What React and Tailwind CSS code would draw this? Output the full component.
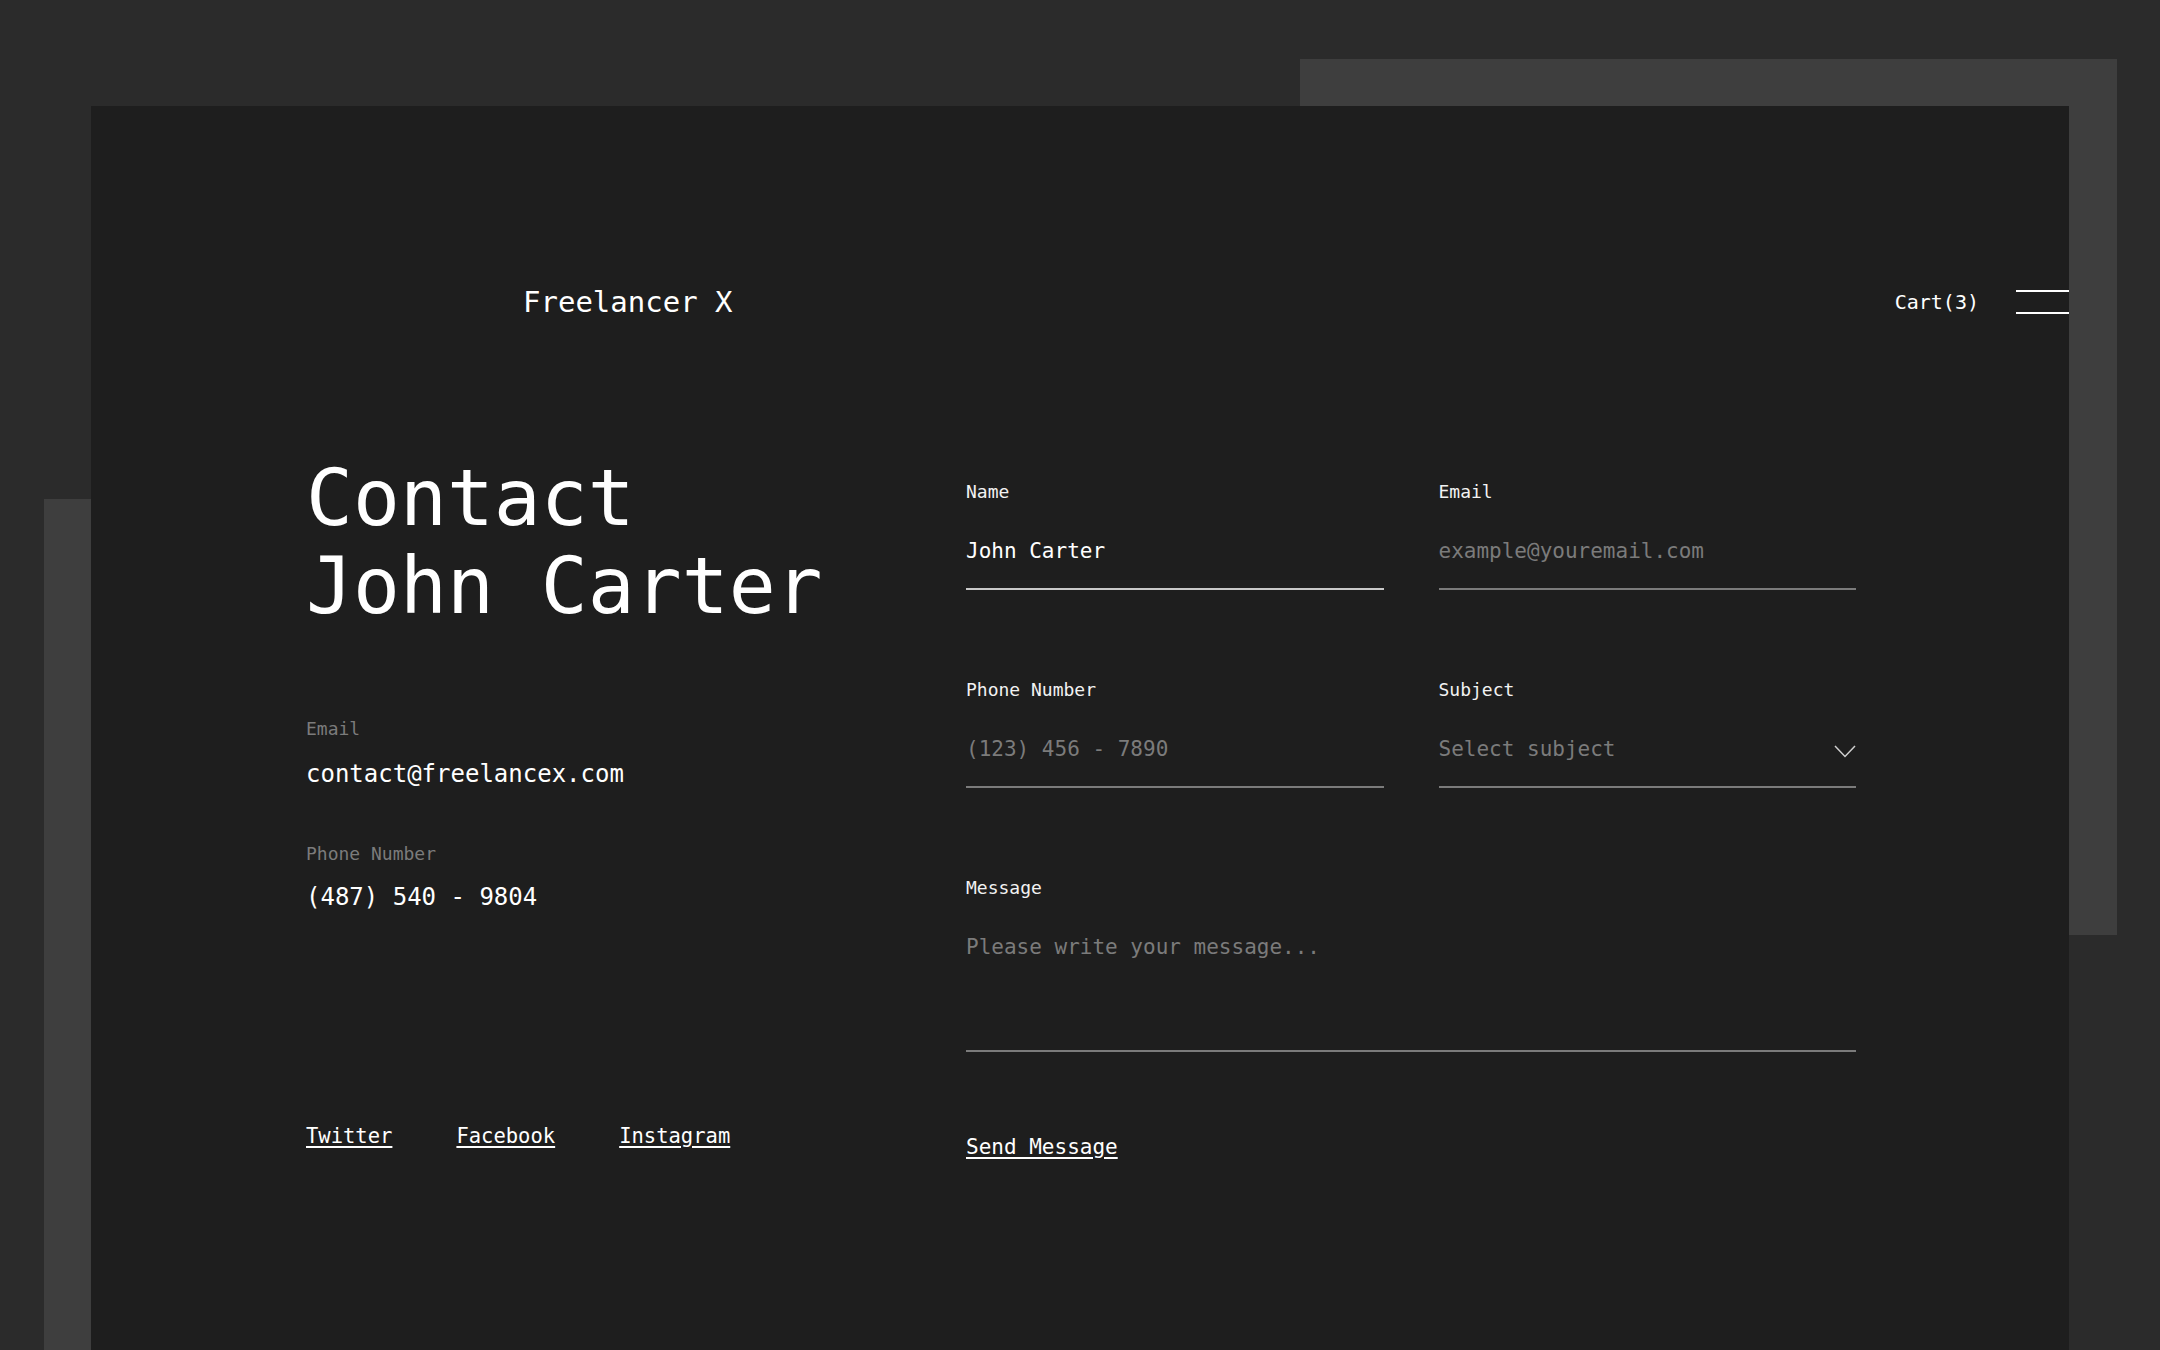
import React from 'react';

const mono = "font-['DejaVu_Sans_Mono','Liberation_Mono',monospace]";

const Field = ({ label, children }) => (
  <div className="flex flex-col">
    <label className="text-[18px] leading-[24px] text-[#f2f2f2]">{label}</label>
    {children}
  </div>
);

const inputCls =
  "w-full h-[86px] pt-[32px] pb-[22px] bg-transparent outline-none text-[21px] leading-[30px] text-white placeholder:text-[#7b7b7b] border-b-2";

export default function App() {
  return (
    <div className={`relative w-full h-[1350px] overflow-hidden bg-[#2b2b2b] ${mono}`}>
      {/* decorative back panels */}
      <div className="absolute left-[1300px] top-[59px] w-[817px] h-[876px] bg-[#3e3e3e]" />
      <div className="absolute left-[44px] top-[499px] w-[60px] h-[851px] bg-[#3e3e3e]" />

      <div className="relative ml-[91px] pt-[106px]">
        <div className="w-[1978px] h-[1244px] bg-[#1e1e1e] pt-[176px]">
          {/* Header */}
          <header className="h-[40px] flex items-center justify-between pl-[432px]">
            <span className="text-[29px] leading-[40px] text-white">Freelancer X</span>
            <div className="flex items-center gap-[37px]">
              <span className="text-[20px] leading-[28px] text-white">Cart(3)</span>
              <button className="w-[53px] h-[24px] flex flex-col justify-between">
                <span className="block h-[2px] w-full bg-white" />
                <span className="block h-[2px] w-full bg-white" />
              </button>
            </div>
          </header>

          {/* Main */}
          <main className="mt-[134px] pl-[215px] pr-[213px] flex">
            <section className="w-[660px] flex flex-col">
              <h1 className="-mt-[2px] text-[78px] leading-[88px] text-white font-normal">
                Contact
                <br />
                John Carter
              </h1>

              <div className="mt-[87px] text-[18px] leading-[24px] text-[#7b7b7b]">Email</div>
              <div className="mt-[17px] text-[24px] leading-[32px] text-white">contact@freelancex.com</div>

              <div className="mt-[52px] text-[18px] leading-[24px] text-[#7b7b7b]">Phone Number</div>
              <div className="mt-[15px] text-[24px] leading-[32px] text-white">(487) 540 - 9804</div>

              <nav className="mt-[209px] flex gap-[64px] text-[20.5px] leading-[28px] text-white">
                <a href="#" className="underline underline-offset-[3px] decoration-[1.5px]">Twitter</a>
                <a href="#" className="underline underline-offset-[3px] decoration-[1.5px]">Facebook</a>
                <a href="#" className="underline underline-offset-[3px] decoration-[1.5px]">Instagram</a>
              </nav>
            </section>

            <form className="flex-1 mt-[24px]" onSubmit={(e) => e.preventDefault()}>
              <div className="grid grid-cols-2 gap-x-[55px] gap-y-[88px]">
                <Field label="Name">
                  <input className={`${inputCls} border-[#c9c9c9]`} defaultValue="John Carter" />
                </Field>
                <Field label="Email">
                  <input className={`${inputCls} border-[#7b7b7b]`} placeholder="example@youremail.com" />
                </Field>
                <Field label="Phone Number">
                  <input className={`${inputCls} border-[#7b7b7b]`} placeholder="(123) 456 - 7890" />
                </Field>
                <Field label="Subject">
                  <div className="h-[86px] pt-[32px] pb-[22px] border-b-2 border-[#7b7b7b] flex items-center justify-between">
                    <span className="text-[21px] leading-[30px] text-[#7b7b7b]">Select subject</span>
                    <svg width="22" height="13" viewBox="0 0 22 13" fill="none" className="mt-[4px]">
                      <polyline points="1,1 11,11.5 21,1" stroke="#cfcfcf" strokeWidth="1.5" />
                    </svg>
                  </div>
                </Field>
                <div className="col-span-2">
                  <Field label="Message">
                    <textarea
                      className="w-full h-[152px] pt-[32px] bg-transparent outline-none resize-none text-[21px] leading-[30px] text-white placeholder:text-[#7b7b7b] border-b-2 border-[#7b7b7b]"
                      placeholder="Please write your message..."
                    />
                  </Field>
                </div>
              </div>
              <button
                type="submit"
                className="mt-[80px] text-[21px] leading-[30px] text-white underline underline-offset-[3px] decoration-[1.5px]"
              >
                Send Message
              </button>
            </form>
          </main>
        </div>
      </div>
    </div>
  );
}
